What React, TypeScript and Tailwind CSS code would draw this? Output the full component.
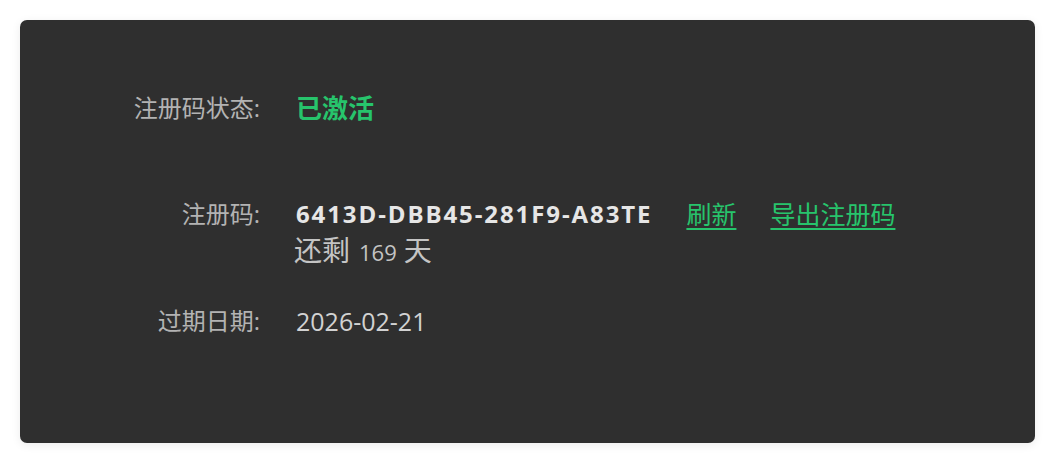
import React from "react";

const font = { fontFamily: '"Open Sans", "Noto Sans CJK SC", sans-serif' };

export default function App() {
  return (
    <div className="w-[1055px] h-[464px] bg-white p-[20px]" style={font}>
      <div className="w-[1015px] h-[423px] bg-[#2f2f2f] rounded-[7px] shadow-[0_2px_10px_rgba(0,0,0,0.08)] pt-[73px]">
        {/* row 1 */}
        <div className="flex items-center h-[30px]">
          <div className="w-[240px] text-right text-[24px] leading-[30px] text-[#b3b3b3]">注册码状态:</div>
          <div className="ml-[36px] text-[26px] leading-[30px] font-bold text-[#27c46c]">已激活</div>
        </div>
        {/* row 2 */}
        <div className="flex items-start mt-[76px]">
          <div className="w-[240px] text-right text-[24px] leading-[30px] text-[#b3b3b3]">注册码:</div>
          <div className="ml-[36px] flex flex-col">
            <div className="flex items-center h-[30px]">
              <span className="text-[24px] font-bold tracking-[1.9px] text-[#e6e6e6] leading-[30px]">6413D-DBB45-281F9-A83TE</span>
              <a className="ml-[34px] text-[25px] leading-[30px] text-[#27c46c] underline underline-offset-[4px]">刷新</a>
              <a className="ml-[34px] text-[25px] leading-[30px] text-[#27c46c] underline underline-offset-[4px]">导出注册码</a>
            </div>
            <div className="flex items-baseline h-[42px] leading-[42px] text-[#c4c4c4]">
              <span className="text-[28px] -ml-[2px]">还剩</span>
              <span className="text-[22px] ml-[9px]">169</span>
              <span className="text-[28px] ml-[7px]">天</span>
            </div>
          </div>
        </div>
        {/* row 3 */}
        <div className="flex items-center h-[30px] mt-[35px]">
          <div className="w-[240px] text-right text-[24px] leading-[30px] text-[#b3b3b3]">过期日期:</div>
          <div className="ml-[36px] text-[25px] leading-[30px] text-[#d2d2d2]">2026-02-21</div>
        </div>
      </div>
    </div>
  );
}
